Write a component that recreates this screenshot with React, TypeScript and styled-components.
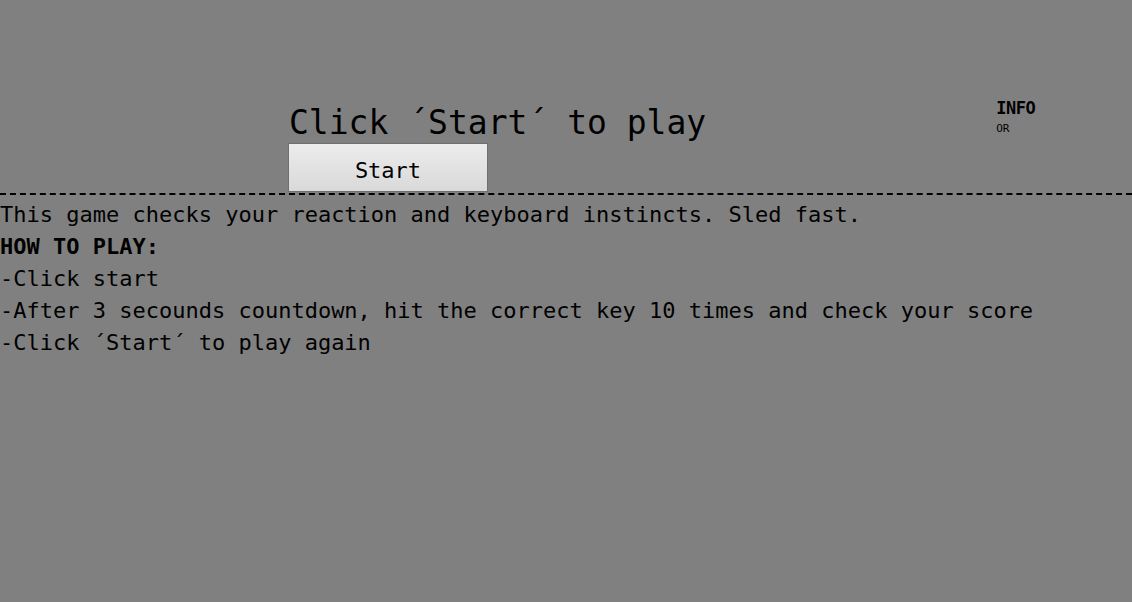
import React from "react";
import styled, { createGlobalStyle } from "styled-components";

const GlobalStyle = createGlobalStyle`
  html, body {
    margin: 0;
    padding: 0;
    background: #808080;
  }
  body {
    font-family: "DejaVu Sans Mono", "Liberation Mono", monospace;
    color: #000;
    min-height: 602px;
  }
`;

const Header = styled.header`
  display: flex;
  align-items: flex-start;
  padding: 98px 0 1px 288px;
  border-bottom: 2px dashed #000;
`;

const TitleBlock = styled.div`
  display: flex;
  flex-direction: column;
  align-items: flex-start;
  margin-top: 5px;
`;

const Title = styled.h1`
  margin: 0 0 0 1px;
  font-size: 33px;
  line-height: 40px;
  font-weight: normal;
  white-space: nowrap;
`;

const StartButton = styled.button`
  width: 200px;
  height: 49px;
  border: 1px solid #6f6f6f;
  background: linear-gradient(#ececec, #d9d9d9);
  font-family: "DejaVu Sans Mono", "Liberation Mono", monospace;
  font-size: 22px;
  color: #000;
  padding: 5px 0 0;
  cursor: pointer;
`;

const Info = styled.div`
  display: flex;
  flex-direction: column;
  margin-left: 290px;
`;

const InfoTitle = styled.span`
  font-size: 17px;
  line-height: 20px;
  font-weight: bold;
  letter-spacing: -0.5px;
`;

const InfoSub = styled.span`
  margin-top: 4px;
  font-size: 11px;
  line-height: 14px;
`;

const Content = styled.main`
  padding-top: 4px;
  font-size: 22px;
  line-height: 32px;
`;

const Line = styled.div<{ $bold?: boolean }>`
  white-space: pre;
  font-weight: ${(p) => (p.$bold ? "bold" : "normal")};
`;

export default function App() {
  return (
    <>
      <GlobalStyle />
      <Header>
        <TitleBlock>
          <Title>Click ´Start´ to play</Title>
          <StartButton>Start</StartButton>
        </TitleBlock>
        <Info>
          <InfoTitle>INFO</InfoTitle>
          <InfoSub>OR</InfoSub>
        </Info>
      </Header>
      <Content>
        <Line>This game checks your reaction and keyboard instincts. Sled fast.</Line>
        <Line $bold>HOW TO PLAY:</Line>
        <Line>-Click start</Line>
        <Line>-After 3 secounds countdown, hit the correct key 10 times and check your score</Line>
        <Line>-Click ´Start´ to play again</Line>
      </Content>
    </>
  );
}
